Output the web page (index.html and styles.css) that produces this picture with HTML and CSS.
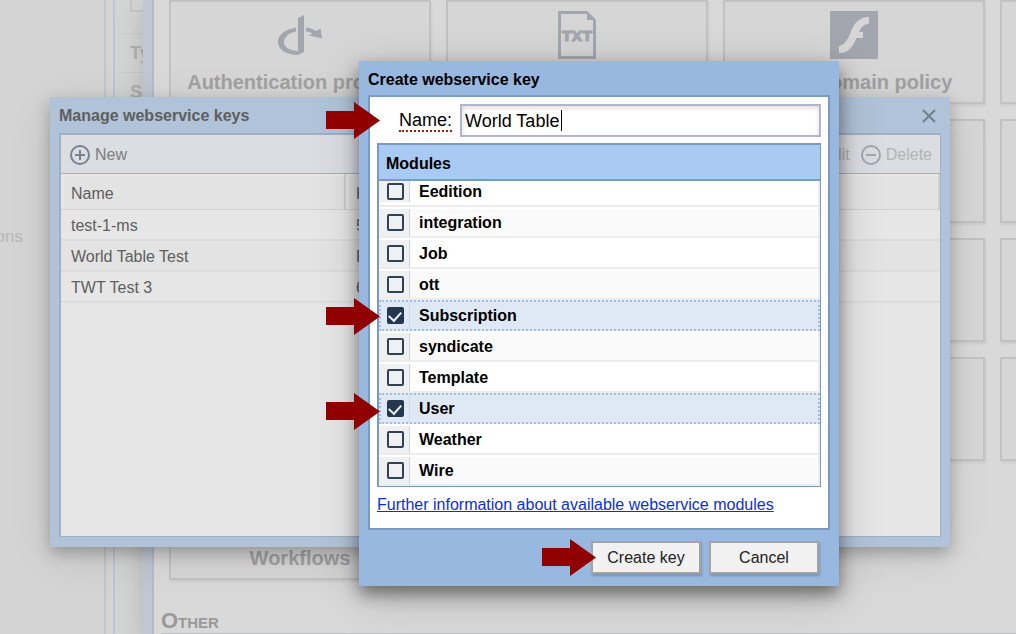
FILE: index.html
```html
<!DOCTYPE html>
<html lang="en">
<head>
<meta charset="utf-8">
<title>Create webservice key</title>
<link rel="stylesheet" href="styles.css">
</head>
<body>
<div class="desktop">
  <div class="page">
    <nav class="page-nav"><a class="page-link" href="#">ons</a></nav>
    <div class="page-side">
      <div class="side-box"></div>
      <div class="side-item">Ty</div>
      <div class="side-item">Se</div>
    </div>
  </div>

  <section class="settings">
    <div class="cards">
      <div class="card">
        <svg class="card-icon" viewBox="0 0 48 48" aria-hidden="true"><path d="M22 7 28 4V41L22 44Z"/><path d="M20 16.500C9 18.500 2 23.500 2 31C2 39 11 44 22 44L22 40C14 40 8 36.500 8 31C8 26 12.500 22 20 20.500ZM30 16.500C34 17 37 18.300 40 20L44.500 17.500 46 27.500 33 24.500 36.500 22.500C34.500 21.400 32.500 20.800 30 20.500Z"/></svg>
        <h3 class="card-title">Authentication provider</h3>
      </div>
      <div class="card">
        <svg class="card-icon" viewBox="0 0 48 48" aria-hidden="true"><path fill-rule="evenodd" d="M5 0H34L43 9V48H5ZM8 3V45H40V9H34V3Z"/><path d="M34 0 43 9H34Z"/><text class="icon-text" x="24" y="30" text-anchor="middle">TXT</text></svg>
      </div>
      <div class="card">
        <svg class="card-icon" viewBox="0 0 48 48" aria-hidden="true"><path d="M0 0H48V48H0Z"/><path class="icon-cut" d="M39 6V13C34 13 31 16 29 21H33V27H26.500C23 36 18 42 9 42V35C14 34 17 30 20 23C24 12 29 6 39 6Z"/></svg>
        <h3 class="card-title">Cross domain policy</h3>
      </div>
      <div class="card"></div>
      <div class="card"></div><div class="card"></div><div class="card"></div><div class="card"></div>
      <div class="card"></div><div class="card"></div><div class="card"></div><div class="card"></div>
      <div class="card"></div><div class="card"></div><div class="card"></div><div class="card"></div>
      <div class="card"><div class="card-icon"></div><h3 class="card-title">Workflows</h3></div>
    </div>
    <h2 class="group-title">Other</h2>
  </section>

  <section class="window keys" aria-labelledby="keys-title">
    <header class="window-head">
      <h2 class="window-title" id="keys-title">Manage webservice keys</h2>
      <button class="close" type="button" aria-label="Close"><svg viewBox="0 0 14 14"><path d="M1 1 13 13M13 1 1 13"/></svg></button>
    </header>
    <div class="keys-body">
      <div class="toolbar">
        <button class="tool" type="button"><svg viewBox="0 0 20 20" aria-hidden="true"><circle cx="10" cy="10" r="9"/><path d="M5 10H15M10 5V15"/></svg>New</button>
        <button class="tool tool-edit" type="button" disabled>Edit</button>
        <button class="tool" type="button" disabled><svg viewBox="0 0 20 20" aria-hidden="true"><circle cx="10" cy="10" r="9"/><path d="M5 10H15"/></svg>Delete</button>
      </div>
      <table class="keys-table">
        <thead><tr><th class="col-name">Name</th><th>Key</th></tr></thead>
        <tbody>
          <tr><td>test-1-ms</td><td>5</td></tr>
          <tr><td>World Table Test</td><td>F</td></tr>
          <tr><td>TWT Test 3</td><td>6</td></tr>
        </tbody>
      </table>
    </div>
  </section>

  <form class="window dialog" role="dialog" aria-labelledby="dialog-title">
    <header class="window-head">
      <h2 class="window-title" id="dialog-title">Create webservice key</h2>
    </header>
    <div class="dialog-body">
      <div class="field">
        <label class="field-label" for="key-name">Name:</label>
        <input class="field-input" id="key-name" type="text" value="World Table">
      </div>
      <div class="modules">
        <h3 class="modules-title">Modules</h3>
        <ul class="modules-list">
          <li><label class="module"><span class="tick"><input type="checkbox"></span>Eedition</label></li>
          <li><label class="module"><span class="tick"><input type="checkbox"></span>integration</label></li>
          <li><label class="module"><span class="tick"><input type="checkbox"></span>Job</label></li>
          <li><label class="module"><span class="tick"><input type="checkbox"></span>ott</label></li>
          <li><label class="module selected"><span class="tick"><input type="checkbox" checked></span>Subscription</label></li>
          <li><label class="module"><span class="tick"><input type="checkbox"></span>syndicate</label></li>
          <li><label class="module"><span class="tick"><input type="checkbox"></span>Template</label></li>
          <li><label class="module selected"><span class="tick"><input type="checkbox" checked></span>User</label></li>
          <li><label class="module"><span class="tick"><input type="checkbox"></span>Weather</label></li>
          <li><label class="module"><span class="tick"><input type="checkbox"></span>Wire</label></li>
        </ul>
      </div>
      <a class="more" href="#">Further information about available webservice modules</a>
    </div>
    <footer class="actions">
      <button class="action" type="button">Create key</button>
      <button class="action" type="button">Cancel</button>
    </footer>
  </form>

  <svg class="arrow arrow-name" viewBox="0 0 54 37" aria-hidden="true"><path d="M0 9H28V0L54 18.500 28 37V27H0Z"/></svg>
  <svg class="arrow arrow-subscription" viewBox="0 0 54 37" aria-hidden="true"><path d="M0 9H28V0L54 18.500 28 37V27H0Z"/></svg>
  <svg class="arrow arrow-user" viewBox="0 0 54 37" aria-hidden="true"><path d="M0 9H28V0L54 18.500 28 37V27H0Z"/></svg>
  <svg class="arrow arrow-create" viewBox="0 0 54 37" aria-hidden="true"><path d="M0 9H28V0L54 18.500 28 37V27H0Z"/></svg>
</div>
</body>
</html>
```
FILE: styles.css
```css
* { box-sizing: border-box; }
body {
  margin: 0;
  font: 16px/20px "Liberation Sans", Arial, sans-serif;
  color: #000;
}
h2, h3, ul { margin: 0; padding: 0; font-size: inherit; }
ul { list-style: none; }
button, input { font: inherit; margin: 0; }

.desktop {
  position: relative;
  height: 100vh;
  overflow: hidden;
  background: #d4d4d4;
}

/* Page behind the windows */
.page { display: flex; height: 100%; gap: 7px; }
.page-nav {
  width: 106px;
  padding-top: 227px;
  border-right: 2px solid #c0c6cc;
}
.page-link {
  display: flex;
  justify-content: flex-end;
  width: 23px;
  font-size: 17px;
  color: #b8b8b8;
  text-decoration: none;
}
.page-side {
  flex: 1;
  padding-left: 7px;
  border-left: 2px solid #c0c6cc;
}
.side-box { height: 12px; margin-left: 8px; border: 2px solid #c6c6c6; border-top: 0; }
.side-item {
  height: 39px;
  padding: 9px 8px;
  border-top: 1px solid #cbcbcb;
  font-size: 18px;
  font-weight: bold;
  color: #b2b2b2;
}
.side-box + .side-item { margin-top: 21px; }

/* Settings window */
.settings {
  position: absolute;
  inset: 0 0 0 143px;
  overflow: hidden;
  border-left: 9px solid #bec7d3;
  background: #d9d9d9;
  box-shadow: 0 8px 24px rgba(0, 0, 0, .16), inset 2px 0 #b4bcc8;
}
.cards {
  display: grid;
  grid-template-columns: repeat(4, 262px);
  grid-auto-rows: 104px;
  gap: 15px;
  padding-left: 17px;
}
.card {
  display: flex;
  flex-direction: column;
  align-items: center;
  gap: 11px;
  padding-top: 9px;
  border: 2px solid #c2c2c2;
  background: #d6d6d6;
  box-shadow: 1px 2px 2px rgba(0, 0, 0, .06);
}
.card-icon { width: 48px; height: 48px; fill: #a3a6ae; }
.icon-cut { fill: #d6d6d6; }
.icon-text { font: bold 14px "DejaVu Sans", sans-serif; stroke: #a3a6ae; stroke-width: 1; }
.card-title { font-size: 20px; line-height: 24px; color: #a1a1a1; white-space: nowrap; }
.group-title {
  margin: 29px 0 0 9px;
  border-bottom: 1px solid #bcc2ca;
  font-size: 22px;
  line-height: 24px;
  font-variant: small-caps;
  color: #999;
}

/* Shared window frame */
.window { position: absolute; display: flex; flex-direction: column; }
.window-head {
  display: flex;
  align-items: center;
  justify-content: space-between;
  height: 36px;
  padding-top: 2px;
}

/* Key list window */
.keys {
  left: 50px;
  top: 97px;
  width: 900px;
  height: 450px;
  padding: 0 9px 10px;
  background: #b1c3d8;
  color: #5e5e5e;
  box-shadow: 0 6px 14px rgba(0, 0, 0, .24), 0 10px 40px rgba(0, 0, 0, .1);
}
.close { width: 24px; height: 24px; padding: 5px; border: 0; background: none; }
.close svg { display: block; width: 14px; height: 14px; stroke: #737f8e; stroke-width: 2; }
.keys-body {
  flex: 1;
  border: solid #a0b0c5;
  border-width: 2px 1px 1px 2px;
  background: #e6e6e6;
}
.toolbar {
  display: flex;
  align-items: center;
  height: 39px;
  padding: 1px 8px 0 9px;
  border-bottom: 1px solid #a0b0c5;
  background: #dbdde2;
}
.tool {
  display: flex;
  align-items: center;
  gap: 5px;
  padding: 0;
  border: 0;
  background: none;
  color: #7d7d7d;
}
.tool svg { width: 20px; height: 20px; fill: none; stroke: #77818f; stroke-width: 2; }
.tool:disabled { color: #b3b3b3; }
.tool:disabled svg { stroke: #a0a7b1; }
.tool-edit { margin: 0 11px 0 auto; }
.keys-table { width: 100%; border-collapse: separate; border-spacing: 0; text-align: left; }
.keys-table th, .keys-table td { padding: 2px 10px 0; font-weight: normal; }
.keys-table th {
  height: 36px;
  padding-top: 5px;
  border-bottom: 1px solid #cfcfcf;
  background: #e3e3e3;
  background-clip: padding-box;
  box-shadow: inset -2px 0 #cfcfcf, inset 3px 2px #e7e7e7;
}
.keys-table td { height: 31px; border-bottom: 2px solid #dcdcdc; }
.keys-table tr:nth-child(even) td { background: #e3e3e3; }
.col-name { width: 285px; }

/* Create key dialog */
.dialog {
  left: 359px;
  top: 61px;
  width: 480px;
  padding: 0 9px 12px;
  background: #98b8e0;
  box-shadow: 0 8px 16px rgba(0, 0, 0, .45), 0 10px 44px rgba(0, 0, 0, .18);
}
.dialog .window-head { height: 34px; padding-top: 4px; }
.dialog-body {
  padding: 7px;
  border: 2px solid #7b9abf;
  background: #fff;
}
.field { display: flex; align-items: center; gap: 8px; padding-left: 22px; font-size: 18px; }
.field-label { border-bottom: 2px dotted #b80f0f; line-height: 20px; }
.field-input {
  flex: 1;
  min-width: 0;
  height: 33px;
  padding: 2px 3px 0;
  border: 2px solid #b3b5c8;
  outline: 0;
  /* visible text cursor after the name */
  background: linear-gradient(#000, #000) 99px 4px / 1px 21px no-repeat #fff;
  box-shadow: inset 0 2px 5px rgba(0, 0, 0, .14);
}
.field-input:focus { background: #fff; }
.modules {
  margin-top: 6px;
  border: solid #7b9abf;
  border-width: 2px 1px 1px 2px;
  font-weight: bold;
}
.modules-title {
  height: 36px;
  padding: 9px 7px 0;
  border-bottom: 2px solid #7b9abf;
  background: #a9cbf3;
  box-shadow: 1px 0 #7b9abf;
}
.module {
  display: flex;
  align-items: center;
  gap: 9px;
  height: 31px;
  padding-top: 2px;
  border-bottom: 2px solid #ececec;
  border-right: 2px solid #ececec;
  box-shadow: inset 0 2px #fff;
}
.modules-list li:first-child .module { height: 26px; padding: 0 0 3px; box-shadow: none; }
li:nth-child(even) .module { background: #fafafa; }
.tick {
  display: flex;
  align-items: center;
  justify-content: center;
  align-self: stretch;
  width: 31px;
  padding-left: 2px;
  border-right: 1px solid #d2d4d6;
  background: #eff0f2;
}
.tick input {
  appearance: none;
  display: flex;
  justify-content: center;
  width: 17px;
  height: 17px;
  border: 2px solid #2f4159;
  border-radius: 2px;
}
.tick input:checked { background: #26364f; border-color: #26364f; }
.tick input:checked::after {
  content: "";
  width: 6px;
  height: 10px;
  border: solid #eef2f8;
  border-width: 0 2px 2px 0;
  transform: rotate(42deg);
}
.modules-list .module.selected {
  padding: 0;
  border: 2px dotted #a3bcee;
  background: #dfe8f5;
  box-shadow: none;
}
.selected .tick { width: 29px; padding: 0; border-color: #cfd9e8; background: none; }
.more { display: block; margin: 8px 0 6px; color: #0b2ee8; }
.actions { display: flex; justify-content: flex-end; gap: 8px; padding: 11px 11px 0 0; }
.action {
  width: 110px;
  height: 33px;
  padding: 0;
  border: 2px solid #a3a3a3;
  background: #f1f1f1;
  color: #222;
  box-shadow: 1px 2px 2px rgba(0, 0, 0, .2);
}

/* Callout arrows laid over the windows */
.arrow { position: absolute; left: 326px; width: 54px; height: 37px; fill: #900000; }
.arrow-name { top: 102px; }
.arrow-subscription { top: 298px; }
.arrow-user { top: 393px; }
.arrow-create { left: 542px; top: 539px; }
```
